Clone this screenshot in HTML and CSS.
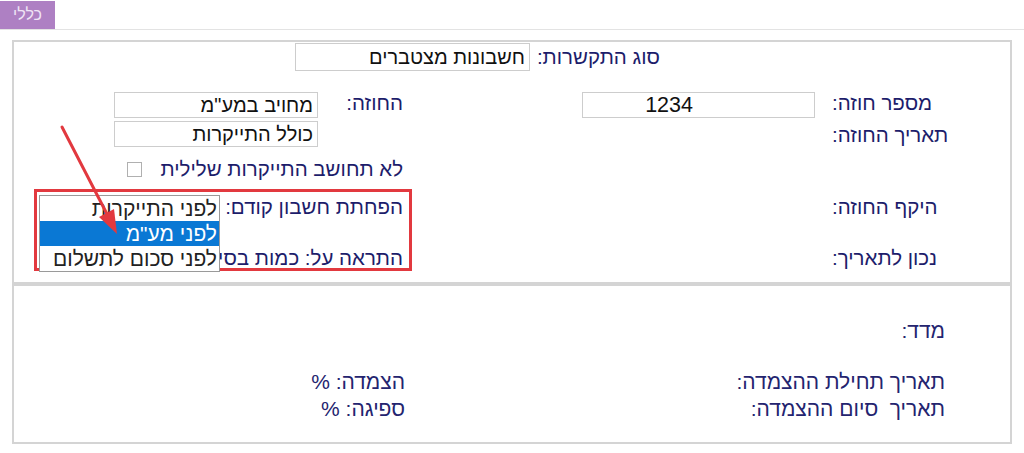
FILE: index.html
```html
<!DOCTYPE html>
<html lang="he" dir="rtl">
<head>
<meta charset="utf-8">
<title>כללי</title>
<link rel="stylesheet" href="styles.css">
</head>
<body>
<div class="tabbar"><div class="tab">כללי</div></div>
<div class="panel">
  <section class="box box1">
    <div class="row1">
      <span class="lbl">סוג התקשרות:</span>
      <div class="field f-type">חשבונות מצטברים</div>
    </div>

    <span class="lbl colA r2">מספר חוזה:</span>
    <div class="field colB r2 num">1234</div>
    <span class="lbl colC r2">החוזה:</span>
    <div class="field colD r2">מחויב במע"מ</div>

    <span class="lbl colA r3">תאריך החוזה:</span>
    <div class="field colD r3">כולל התייקרות</div>

    <div class="chkrow">
      <span class="lbl">לא תחושב התייקרות שלילית</span>
      <span class="chk"></span>
    </div>

    <div class="colA r5 stackA">
      <span class="lbl">היקף החוזה:</span>
      <span class="lbl">נכון לתאריך:</span>
    </div>

    <div class="redbox">
      <span class="lbl">הפחתת חשבון קודם:</span>
      <span class="lbl">התראה על: כמות בסיס</span>
      <ul class="listbox">
        <li>לפני התייקרות</li>
        <li class="sel">לפני מע"מ</li>
        <li>לפני סכום לתשלום</li>
      </ul>
    </div>
  </section>

  <section class="box box2">
    <div class="lbl2 madad">מדד:</div>
    <div class="grid2">
      <span class="lbl2">תאריך תחילת ההצמדה:</span>
      <span class="lbl2">הצמדה: %</span>
      <span class="lbl2">תאריך&nbsp; סיום ההצמדה:</span>
      <span class="lbl2">ספיגה: %</span>
    </div>
  </section>
</div>

<svg class="arrow" width="1024" height="453" viewBox="0 0 1024 453" aria-hidden="true">
  <line x1="62" y1="127" x2="108" y2="216" stroke="#e2393f" stroke-width="3" stroke-linecap="round"/>
  <polygon points="117,234 99,217 114,209" fill="#e2393f"/>
</svg>
</body>
</html>
```

FILE: styles.css
```css
* { box-sizing: border-box; }
html, body { margin: 0; padding: 0; background: #fff; }
body {
  width: 1024px;
  height: 453px;
  overflow: hidden;
  direction: rtl;
  font-family: "Liberation Sans", "DejaVu Sans", sans-serif;
  position: relative;
}

.tabbar {
  height: 30px;
  display: flex;
  justify-content: flex-end;
  align-items: flex-end;
  border-bottom: 1px solid #e3e3e3;
}
.tab {
  width: 55px;
  height: 28px;
  background: #ae80c3;
  color: #efe4f5;
  font-size: 16px;
  line-height: 28px;
  text-align: center;
}

.panel {
  margin: 10px 12px 0 12px;
}

.box {
  border: 2px solid #d4d4d4;
}

.box1 {
  height: 244px;
  display: grid;
  grid-template-columns: 50px 128px 17px 233px 179px 85px 204px 1fr;
  grid-template-rows: 50px 29px 26px 42px 88px;
  position: relative;
}

.lbl {
  color: #1d1d6b;
  font-size: 20.5px;
  line-height: 24px;
  white-space: nowrap;
}

.field {
  border: 1px solid #cdcdcd;
  background: #fff;
  color: #111;
  font-size: 20px;
  line-height: 24px;
  padding: 0 4px;
  white-space: nowrap;
  overflow: hidden;
  height: 26px;
}
.field.num {
  text-align: right;
  padding-right: 121px;
  font-size: 21.5px;
}

.row1 {
  grid-column: 1 / -1;
  grid-row: 1;
  display: flex;
  align-items: center;
  gap: 5px;
  padding-right: 350px;
  padding-top: 1px;
  align-self: start;
}
.row1 .lbl { width: 125px; }
.f-type { width: 235px; height: 28px; line-height: 26px; }

.colA { grid-column: 2; text-align: left; }
.colB { grid-column: 4; }
.colC { grid-column: 6; }
.colD { grid-column: 7; }
.r2 { grid-row: 2; align-self: start; }
.r3 { grid-row: 3; align-self: start; }
.r5 { grid-row: 5; }

span.lbl.r2 { margin-top: -1px; }
span.lbl.r3 { margin-top: 2px; }

.chkrow {
  grid-column: 6 / 8;
  grid-row: 4;
  display: flex;
  align-items: center;
  gap: 19px;
  padding-top: 10px;
  align-self: start;
}
.chk {
  width: 15px;
  height: 15px;
  border: 1px solid #b0b0b0;
  background: #fff;
}

.stackA {
  display: flex;
  flex-direction: column;
  align-items: flex-end;
  padding-top: 6px;
  gap: 27px;
}

.redbox {
  grid-column: 5 / -1;
  grid-row: 5;
  margin: 0 170px 6px 20px;
  border: 3px solid #e2393f;
  position: relative;
  display: flex;
  flex-direction: column;
  padding: 3px 6px 0 0;
  gap: 27px;
}

.listbox {
  position: absolute;
  left: 2px;
  top: 3px;
  width: 181px;
  height: 77px;
  margin: 0;
  padding: 0;
  list-style: none;
  border: 1px solid #9a9a9a;
  background: #fff;
}
.listbox li {
  height: 25px;
  line-height: 25px;
  font-size: 21px;
  color: #222;
  padding-right: 2px;
  white-space: nowrap;
}
.listbox li.sel {
  background: #0a78d4;
  color: #fff;
}

.box2 {
  height: 160px;
  padding: 34px 65px 0 0;
}

.lbl2 {
  color: #24246f;
  font-size: 21px;
  line-height: 22px;
  white-space: pre;
}
.madad { height: 22px; }
.grid2 {
  margin-top: 26px;
  display: grid;
  grid-template-columns: 540px 1fr;
  grid-auto-rows: 27px;
  align-items: center;
}

.arrow {
  position: absolute;
  left: 0;
  top: 0;
  pointer-events: none;
}
```
